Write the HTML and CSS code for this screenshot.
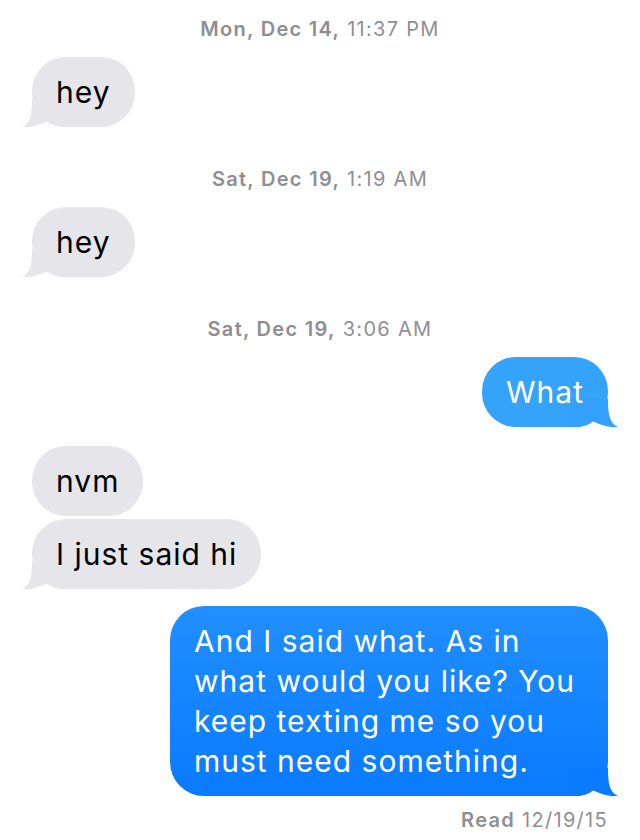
FILE: index.html
```html
<!DOCTYPE html>
<html lang="en">
<head>
    <meta charset="UTF-8">
    <meta name="viewport" content="width=device-width, initial-scale=1.0">
    <title>Messages</title>
    <link rel="stylesheet" href="styles.css">
</head>
<body>
    <div class="thread">
        <div class="stamp"><b>Mon, Dec 14,</b> 11:37 PM</div>
        <div class="msg them">
            hey
            <svg class="tail" viewBox="0 0 52 28"><path d="M12,0 C12,14 11,24 2,28 C10,29 19,26 27,22.5 C31,25.5 36,28 44,28 L52,28 L52,0 Z"/></svg>
        </div>

        <div class="stamp"><b>Sat, Dec 19,</b> 1:19 AM</div>
        <div class="msg them">
            hey
            <svg class="tail" viewBox="0 0 52 28"><path d="M12,0 C12,14 11,24 2,28 C10,29 19,26 27,22.5 C31,25.5 36,28 44,28 L52,28 L52,0 Z"/></svg>
        </div>

        <div class="stamp"><b>Sat, Dec 19,</b> 3:06 AM</div>
        <div class="msg me light">
            What
            <svg class="tail" viewBox="0 0 52 28"><path d="M12,0 C12,14 11,24 2,28 C10,29 19,26 27,22.5 C31,25.5 36,28 44,28 L52,28 L52,0 Z"/></svg>
        </div>

        <!-- grouped replies: only the last one gets a tail -->
        <div class="msg them">nvm</div>
        <div class="msg them next">
            I just said hi
            <svg class="tail" viewBox="0 0 52 28"><path d="M12,0 C12,14 11,24 2,28 C10,29 19,26 27,22.5 C31,25.5 36,28 44,28 L52,28 L52,0 Z"/></svg>
        </div>

        <div class="msg me long">
            And I said what. As in what would you like? You keep texting me so you must need something.
            <svg class="tail" viewBox="0 0 52 28"><path d="M12,0 C12,14 11,24 2,28 C10,29 19,26 27,22.5 C31,25.5 36,28 44,28 L52,28 L52,0 Z"/></svg>
        </div>
        <div class="receipt"><b>Read</b> 12/19/15</div>
    </div>
</body>
</html>
```

FILE: styles.css
```css
body { margin: 0; background: #fff; font-family: Inter, "Liberation Sans", sans-serif; }
.thread { display: flex; flex-direction: column; padding: 17px 32px 0; }

.stamp { align-self: center; font-size: 20px; line-height: 24px; letter-spacing: 1.3px; color: #8e8e93; margin-bottom: 16px; }
.stamp b, .receipt b { font-weight: 600; }
.msg + .stamp { margin-top: 40px; }

.msg { position: relative; z-index: 0; max-width: 438px; box-sizing: border-box; padding: 15px 24px; border-radius: 34px; font-size: 30px; line-height: 40px; letter-spacing: 1px; }
.msg .tail { position: absolute; z-index: -1; bottom: 0; width: 52px; height: 28px; }
.them { align-self: flex-start; background: #e5e5ea; color: #000; }
.them .tail { left: -12px; fill: #e5e5ea; }
.them.next { margin-top: 3px; }
.me { align-self: flex-end; color: #fff; }
.me .tail { right: -12px; transform: scaleX(-1); }
.me + .msg { margin-top: 19px; }
.msg.them + .msg.me { margin-top: 17px; }

.light { background: #35a3fa; }
.light .tail { fill: #33a1fb; }
.long { background: linear-gradient(#218ffd, #0a7aff); }
.long .tail { fill: #0a7aff; }

.receipt { align-self: flex-end; margin-top: 12px; font-size: 20px; line-height: 24px; letter-spacing: 1.3px; color: #8e8e93; }
```
